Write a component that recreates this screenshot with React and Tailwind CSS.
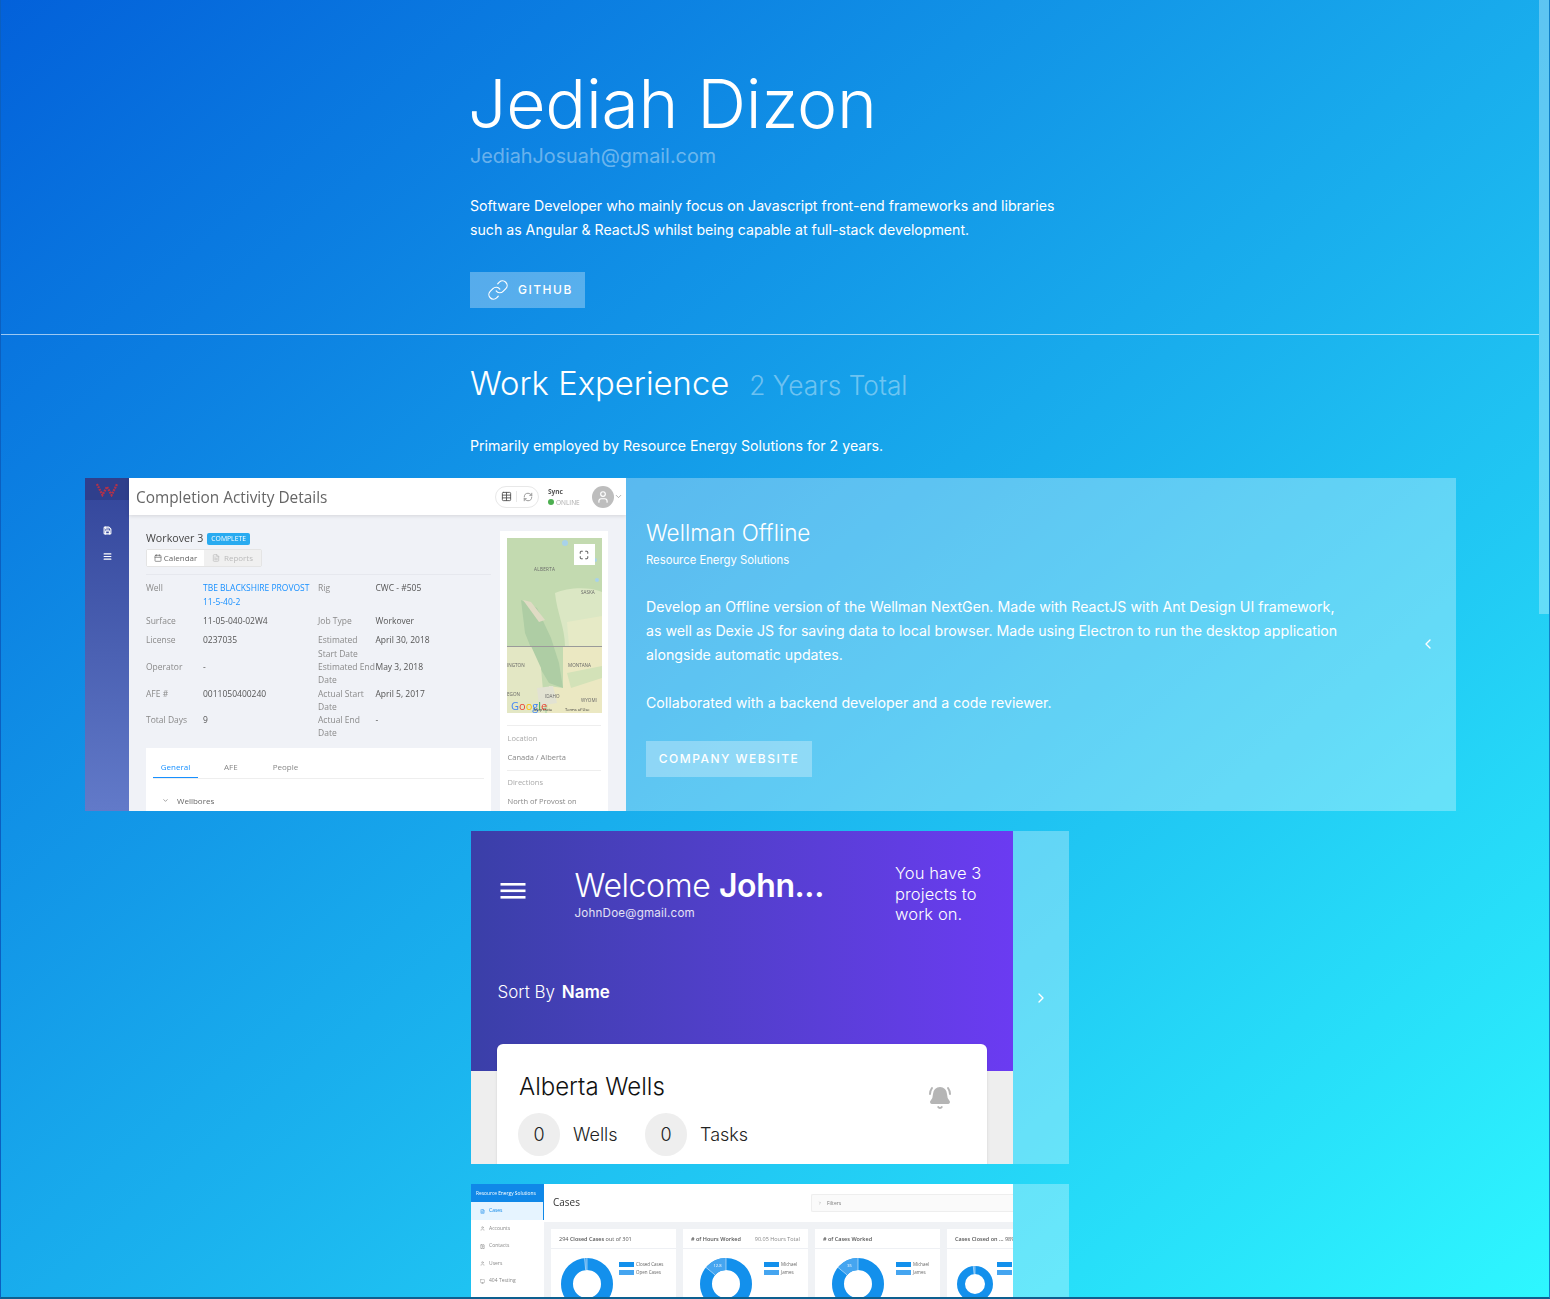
import React from "react";
import { Link as LinkIcon, ChevronLeft, ChevronRight, BellRing, Calendar, Table, RefreshCw, User, ChevronDown, Maximize, Save, AlignJustify, FileText, Contact, Monitor } from "lucide-react";

function MapArt() {
  return (
    <svg viewBox="0 0 95 175" className="block h-[175px] w-[95px]" preserveAspectRatio="none">
      <rect width="95" height="175" fill="#c3dab0" />
      <path d="M48 55C60 50 80 48 95 54V108H58C58 90 50 75 48 55Z" fill="#dbe7c4" />
      <path d="M60 84L95 78V108H62Z" fill="#e6eac6" />
      <path d="M14 62L30 70L44 100L52 125L56 150L42 145L30 125L18 95Z" fill="#aecda4" />
      <path d="M16 62L24 64L38 82L32 84Z" fill="#e0dbc4" />
      <path d="M0 108H24L34 130L38 175H0Z" fill="#e3e7c4" />
      <path d="M56 109H95V175H40L42 148L56 150Z" fill="#ebe8c2" />
      <path d="M60 135L95 128V140L64 150Z" fill="#d3e2b8" />
      <path d="M30 150L46 148L50 165L32 168Z" fill="#e2e2d2" />
      <circle cx="58" cy="5" r="3" fill="#a8d2ea" />
      <circle cx="88" cy="22" r="2" fill="#a8d2ea" />
      <circle cx="90" cy="42" r="2" fill="#a8d2ea" />
      <circle cx="70" cy="24" r="1.5" fill="#a8d2ea" />
      <rect y="108" width="95" height="1" fill="#9a9a9a" />
      <text x="27" y="33" fontSize="4.6" fill="#666" letterSpacing=".3">ALBERTA</text>
      <text x="74" y="56" fontSize="4.6" fill="#666">SASKA</text>
      <text x="0" y="129" fontSize="4.6" fill="#666">INGTON</text>
      <text x="61" y="129" fontSize="4.6" fill="#666">MONTANA</text>
      <text x="0" y="158" fontSize="4.6" fill="#666">EGON</text>
      <text x="38" y="160" fontSize="4.6" fill="#666">IDAHO</text>
      <text x="74" y="164" fontSize="4.6" fill="#666">WYOMI</text>
      <text x="4" y="172" fontSize="11" fill="#4285f4">G<tspan fill="#ea4335">o</tspan><tspan fill="#fbbc05">o</tspan><tspan fill="#4285f4">g</tspan><tspan fill="#34a853">l</tspan><tspan fill="#ea4335">e</tspan></text>
      <text x="27" y="173" fontSize="4" fill="#333">Map Data</text>
      <text x="58" y="173" fontSize="4" fill="#333">Terms of Use</text>
    </svg>
  );
}

function Row({ a, b, c, d, link }) {
  return (
    <div className="flex">
      <div className="w-[57px] shrink-0 text-[#8a8a8a]">{a}</div>
      <div className={"w-[115px] shrink-0 " + (link ? "text-[#1890ff]" : "text-[#555]")}>{b}</div>
      <div className="w-[57.5px] shrink-0 text-[#8a8a8a]">{c}</div>
      <div className="text-[#555]">{d}</div>
    </div>
  );
}

function Wellman() {
  return (
    <div className="flex h-[333px] w-[541px] shrink-0 overflow-hidden bg-[#f0f2f7] font-['Open_Sans',sans-serif] text-[8.5px] leading-[13.3px] blur-[0.35px]">
      <div className="flex w-[44px] shrink-0 flex-col items-center bg-gradient-to-b from-[#33459a] to-[#627ac9] text-white">
        <div className="flex h-[22px] w-full items-center justify-center bg-[#2f3f8c]">
          <svg viewBox="0 0 24 14" className="h-[15px] w-[22px]"><path d="M1 1L7 13L12 4L17 13L23 1" fill="none" stroke="#b53148" strokeWidth="2.5" strokeDasharray="2 1" /></svg>
        </div>
        <Save className="mt-[26px] h-[9px] w-[9px]" strokeWidth={3} />
        <AlignJustify className="mt-[17px] h-[9px] w-[9px]" strokeWidth={3} />
      </div>
      <div className="flex min-w-0 grow flex-col">
        <div className="flex h-[37px] shrink-0 items-center bg-white pl-[7px] pr-[3px] shadow-[0_1px_4px_rgba(0,0,0,0.12)]">
          <div className="mt-[2px] grow text-[15.4px] font-medium text-[#666]">Completion Activity Details</div>
          <div className="flex h-[22px] items-center rounded-full border border-[#e8e8e8]">
            <div className="flex w-[21px] justify-center border-r border-[#e8e8e8]"><Table className="h-[11px] w-[11px] text-[#555]" /></div>
            <div className="flex w-[21px] justify-center"><RefreshCw className="h-[10px] w-[10px] text-[#888]" /></div>
          </div>
          <div className="ml-[9px] w-[44px] text-[6.5px] leading-[11px]">
            <div className="font-bold text-[#555]">Sync</div>
            <div className="flex items-center gap-[2px] text-[#aaa]"><span className="h-[6px] w-[6px] rounded-full bg-[#4caf50]" />ONLINE</div>
          </div>
          <div className="flex h-[22px] w-[22px] items-center justify-center rounded-full bg-[#bdbdbd]"><User className="h-[14px] w-[14px] text-white" /></div>
          <ChevronDown className="h-[9px] w-[9px] text-[#999]" />
        </div>
        <div className="flex min-h-0 grow pl-[17px] pt-[16px]">
          <div className="w-[344.5px] shrink-0">
            <div className="-mt-[1px] flex h-[17px] items-center gap-[4px] text-[10.7px] font-medium text-[#444]">
              Workover 3
              <span className="rounded-[2px] bg-[#29abf0] px-[4px] text-[6.8px] leading-[12px] text-white">COMPLETE</span>
            </div>
            <div className="mt-[2px] flex h-[18px] w-[116px] rounded-[2px] border border-[#e4e4e4] text-[8px] leading-[16px]">
              <div className="flex w-[57px] items-center justify-center gap-[2px] bg-white text-[#666]"><Calendar className="h-[8px] w-[8px]" />Calendar</div>
              <div className="flex grow items-center justify-center gap-[4px] bg-[#f0f0f0] text-[#bbb]"><FileText className="h-[8px] w-[8px]" />Reports</div>
            </div>
            <div className="mt-[7px] border-t border-[#e6e8ee] pt-[6px]">
              <Row a="Well" b={<>TBE BLACKSHIRE PROVOST<br />11-5-40-2</>} c="Rig" d="CWC - #505" link />
              <div className="h-[6px]" />
              <Row a="Surface" b="11-05-040-02W4" c="Job Type" d="Workover" />
              <div className="h-[6px]" />
              <Row a="License" b="0237035" c={<>Estimated<br />Start Date</>} d="April 30, 2018" />
              <Row a="Operator" b="-" c={<>Estimated End<br />Date</>} d="May 3, 2018" />
              <Row a="AFE #" b="0011050400240" c={<>Actual Start<br />Date</>} d="April 5, 2017" />
              <Row a="Total Days" b="9" c={<>Actual End<br />Date</>} d="-" />
            </div>
            <div className="mt-[8px] h-[80px] bg-white px-[7px] pt-[12px] text-[8px] text-[#888]">
              <div className="flex border-b border-[#eee]">
                <div className="w-[45px] border-b-[1px] border-[#1890ff] pb-[4px] text-center text-[#1890ff]">General</div>
                <div className="ml-[26px]">AFE</div>
                <div className="ml-[35px]">People</div>
              </div>
              <div className="mt-[15px] flex items-center gap-[8px] pl-[9px] text-[#666]"><ChevronDown className="h-[7px] w-[7px]" />Wellbores</div>
            </div>
          </div>
          <div className="ml-[9px] h-[290px] w-[108px] bg-white px-[7px] pt-[7px]">
            <div className="relative">
              <MapArt />
              <div className="absolute right-[6px] top-[6px] flex h-[21px] w-[21px] items-center justify-center bg-white"><Maximize className="h-[10px] w-[10px] text-[#333]" /></div>
            </div>
            <div className="mt-[12px] border-t border-[#eee] pl-[1px] pt-[6px] text-[7.5px] text-[#aaa]">Location</div>
            <div className="mt-[5px] border-b border-[#eee] pb-[6px] pl-[1px] text-[7.5px] text-[#888]">Canada / Alberta</div>
            <div className="mt-[5px] pl-[1px] text-[7.5px] text-[#aaa]">Directions</div>
            <div className="mt-[6px] whitespace-nowrap pl-[1px] text-[7.5px] leading-[12px] text-[#888]">North of Provost on<br />Highway #899 for 6.1km</div>
          </div>
        </div>
      </div>
    </div>
  );
}

function Mobile() {
  return (
    <div className="relative h-[333px] w-[542px] shrink-0 overflow-hidden bg-[#eeeeee] font-['Inter',sans-serif]">
      <div className="h-[240px] bg-gradient-to-r from-[#3a3fa8] to-[#6b3bf2] text-white">
        <div className="flex h-[71px] pl-[29px] pt-[24px]">
          <svg width="26" height="16" viewBox="0 0 26 16" className="mt-[28px] shrink-0" fill="#fff">
            <rect x="0.5" width="25" height="2.6" />
            <rect x="0.5" y="6.5" width="25" height="2.6" />
            <rect x="0.5" y="13" width="25" height="2.6" />
          </svg>
          <div className="ml-[48.5px] w-[320.5px] shrink-0">
            <div className="mt-[1px] h-[60px] text-[32px] font-light leading-[60px] tracking-[-0.4px]">Welcome <b className="font-semibold">John...</b></div>
            <div className="-mt-[11px] text-[11.6px] leading-[16px] tracking-[0.2px] text-white/85">JohnDoe@gmail.com</div>
          </div>
          <div className="mt-[8px] text-[16.5px] font-light leading-[20.5px] tracking-[0.1px]">You have 3<br />projects to<br />work on.</div>
        </div>
        <div className="mt-[78px] pl-[26.5px] text-[17px] font-light leading-[24px]">Sort By <b className="ml-[2px] font-semibold">Name</b></div>
      </div>
      <div className="absolute left-[26px] top-[213px] h-[130px] w-[490px] rounded-[6px] bg-white px-[22px] pt-[25px] shadow-sm">
        <div className="text-[24px] font-light leading-[36px] text-[#111]">Alberta Wells</div>
        <BellRing className="absolute right-[35px] top-[42px] h-[24px] w-[24px] fill-[#b5b5b5] text-[#b5b5b5]" />
        <div className="-ml-[1px] mt-[8px] flex items-center text-[18px] font-light text-[#222]">
          <div className="flex h-[43px] w-[42px] items-center justify-center rounded-full bg-[#eeeeee]">0</div>
          <div className="ml-[13px] w-[72px]">Wells</div>
          <div className="flex h-[43px] w-[42px] items-center justify-center rounded-full bg-[#eeeeee]">0</div>
          <div className="ml-[13px]">Tasks</div>
        </div>
      </div>
    </div>
  );
}

function Donut({ size, hole, slice, label }) {
  const r = (size + hole) / 4;
  const sw = (size - hole) / 2;
  const c = 2 * Math.PI * r;
  const m = size / 2;
  const a = (-90 - slice * 360) * (Math.PI / 180);
  const la = (-90 - slice * 180) * (Math.PI / 180);
  return (
    <svg width={size} height={size} viewBox={`0 0 ${size} ${size}`} className="block">
      <circle cx={m} cy={m} r={r} fill="none" stroke="#1390ec" strokeWidth={sw} />
      <circle cx={m} cy={m} r={r} fill="none" stroke="#45a5f0" strokeWidth={sw} strokeDasharray={`${c * slice} ${c}`} transform={`rotate(${-90 - slice * 360} ${m} ${m})`} />
      <line x1={m} y1={m - hole / 2} x2={m} y2={0} stroke="#fff" strokeWidth="0.5" />
      <line x1={m + (hole / 2) * Math.cos(a)} y1={m + (hole / 2) * Math.sin(a)} x2={m + m * Math.cos(a)} y2={m + m * Math.sin(a)} stroke="#fff" strokeWidth="0.5" />
      {label && <text x={m + r * Math.cos(la)} y={m + r * Math.sin(la) + 1.5} fontSize="4" fill="#fff" textAnchor="middle">{label}</text>}
    </svg>
  );
}

function CaseCard({ title, extra, size, hole, slice, legend, pl, lgap, top = 0, label }) {
  return (
    <div className="w-[125px] shrink-0 bg-white">
      <div className="flex h-[20px] items-center justify-between whitespace-nowrap border-b border-[#eef0f4] pl-[8px] pr-[8px] text-[5.5px] text-[#555]">
        <span>{title}</span>{extra && <span className="text-[#888]">{extra}</span>}
      </div>
      <div className="flex items-start pt-[9px]" style={{ paddingLeft: pl }}>
        <div style={{ marginTop: top }}><Donut size={size} hole={hole} slice={slice} label={label} /></div>
        <div className="text-[4.5px] leading-[8px] text-[#666]" style={{ marginLeft: lgap }}>
          <div className="mt-[2px] flex items-center gap-[2px]"><span className="h-[5px] w-[15px] bg-[#1390ec]" />{legend[0]}</div>
          <div className="flex items-center gap-[2px]"><span className="h-[5px] w-[15px] bg-[#45a5f0]" />{legend[1]}</div>
        </div>
      </div>
    </div>
  );
}

function Cases() {
  const items = [["Cases", FileText], ["Accounts", User], ["Contacts", Contact], ["Users", User], ["404 Testing", Monitor]];
  return (
    <div className="flex h-[333px] w-[542px] shrink-0 overflow-hidden bg-[#f0f2f5] font-['Open_Sans',sans-serif] blur-[0.25px]">
      <div className="w-[73px] shrink-0 bg-white">
        <div className="flex h-[18px] items-center whitespace-nowrap bg-[#1088e8] pl-[5px] text-[4.85px] text-white">Resource Energy Solutions</div>
        {items.map(([t, I], i) => (
          <div key={t} className={"flex h-[17.5px] items-center gap-[4px] pl-[9px] text-[5px] " + (i === 0 ? "border-r border-[#1088e8] bg-[#e6f4ff] text-[#1088e8]" : "text-[#888]")}>
            <I className="h-[5px] w-[5px]" />{t}
          </div>
        ))}
      </div>
      <div className="min-w-0 grow">
        <div className="flex h-[38px] items-center justify-between bg-white pl-[9px]">
          <div className="-mt-[2px] text-[10px] font-medium text-[#333]">Cases</div>
          <div className="flex h-[18px] w-[202px] items-center gap-[5px] rounded-l-[2px] border border-r-0 border-[#eeeeee] bg-[#fafafa] pl-[6px] text-[5px] text-[#777]">
            <ChevronRight className="h-[4px] w-[4px]" />Filters
          </div>
        </div>
        <div className="flex gap-[7px] pl-[7px] pt-[7px]">
          <CaseCard title={<>294 <b className="font-semibold">Closed Cases</b> out of 301</>} size={52} hole={28} slice={0.015} legend={["Closed Cases", "Open Cases"]} pl={10} lgap={6} />
          <CaseCard title={<b className="font-semibold"># of Hours Worked</b>} extra="90.05 Hours Total" size={52} hole={28} slice={0.14} label="12.8" legend={["Michael", "James"]} pl={17} lgap={12} />
          <CaseCard title={<b className="font-semibold"># of Cases Worked</b>} size={52} hole={28} slice={0.14} label="35" legend={["Michael", "James"]} pl={17} lgap={12} />
          <CaseCard title={<><b className="font-semibold">Cases Closed on ...</b> 98%</>} size={36} hole={20} slice={0.015} top={8} legend={["Michael", "James"]} pl={10} lgap={4} />
        </div>
      </div>
    </div>
  );
}

function Slide({ children }) {
  return (
    <div className="flex w-[598px] bg-white/30">
      {children}
      <div className="flex grow items-center justify-center"><ChevronRight className="h-[16px] w-[16px] text-white" strokeWidth={2} /></div>
    </div>
  );
}

export default function App() {
  return (
    <div className="relative h-[1299px] w-[1550px] overflow-hidden border-b-2 border-l border-r border-b-[#0d5f8f] border-l-[#0b5fc0] border-r-[#0f7fc8] bg-[linear-gradient(to_bottom_right,#0361da,#2ef7ff)] font-['Inter',sans-serif] text-white">
      <div className="w-[1538px]">
        <header className="border-b border-white/60 pb-[26px] pt-[59px]">
          <div className="ml-[469px] w-[600px]">
            <h1 className="-ml-[2px] text-[67.8px] font-light leading-[88px] tracking-[-0.2px]">Jediah Dizon</h1>
            <div className="-mt-[5px] text-[19.8px] font-normal leading-[28px] text-white/40">JediahJosuah@gmail.com</div>
            <p className="mt-[24px] text-[14.15px] font-normal leading-[24px]">Software Developer who mainly focus on Javascript front-end frameworks and libraries<br />such as Angular &amp; ReactJS whilst being capable at full-stack development.</p>
            <a className="mt-[30px] flex h-[36px] w-[115px] items-center gap-[9px] bg-white/30 pl-[17px] text-[12px] font-medium tracking-[1.5px]">
              <LinkIcon className="h-[22px] w-[22px]" strokeWidth={1.3} />GITHUB
            </a>
          </div>
        </header>
        <section className="pt-[27px]">
          <div className="ml-[469px] w-[600px]">
            <div className="flex items-baseline">
              <h2 className="text-[32.8px] font-light leading-[42px]">Work Experience</h2>
              <span className="ml-[20px] text-[26.3px] font-light text-white/40">2 Years Total</span>
            </div>
            <p className="mt-[29px] text-[14.2px] font-normal leading-[24px]">Primarily employed by Resource Energy Solutions for 2 years.</p>
          </div>
          <div className="ml-[84px] mt-[20px] flex h-[333px] w-[1371px] bg-white/30">
            <Wellman />
            <div className="relative grow pl-[20px] pt-[36px]">
              <h3 className="text-[22.5px] font-light leading-[38px]">Wellman Offline</h3>
              <div className="text-[11.3px] font-normal leading-[16px]">Resource Energy Solutions</div>
              <p className="mt-[27px] w-[700px] text-[14.2px] font-normal leading-[24px]">Develop an Offline version of the Wellman NextGen. Made with ReactJS with Ant Design UI framework,<br />as well as Dexie JS for saving data to local browser. Made using Electron to run the desktop application<br />alongside automatic updates.</p>
              <p className="mt-[24px] text-[14.2px] font-normal leading-[24px]">Collaborated with a backend developer and a code reviewer.</p>
              <a className="mt-[26px] flex h-[36px] w-[166px] items-center justify-center bg-white/30 text-[12px] font-medium tracking-[1.5px]">COMPANY WEBSITE</a>
              <ChevronLeft className="absolute right-[20px] top-[158px] h-[16px] w-[16px]" strokeWidth={2} />
            </div>
          </div>
          <div className="ml-[470px] mt-[20px] flex w-[598px] flex-col gap-[20px]">
            <Slide><Mobile /></Slide>
            <Slide><Cases /></Slide>
          </div>
        </section>
      </div>
      <div className="absolute right-0 top-0 h-[614px] w-[10px] bg-white/30" />
    </div>
  );
}
